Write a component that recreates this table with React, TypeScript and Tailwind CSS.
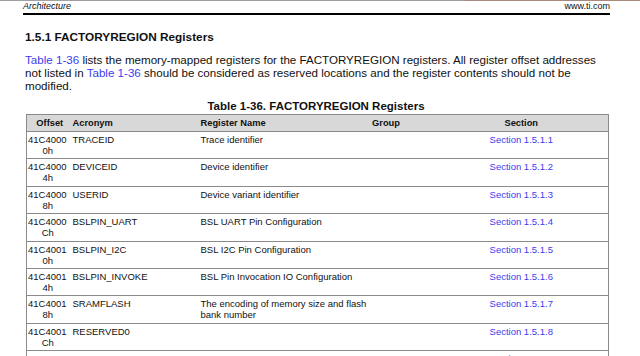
import React from 'react';

type Row = { off: string; sub: string; acr: string; name: string[]; sec: string };

const rows: Row[] = [
  { off: '41C4000', sub: '0h', acr: 'TRACEID', name: ['Trace identifier'], sec: 'Section 1.5.1.1' },
  { off: '41C4000', sub: '4h', acr: 'DEVICEID', name: ['Device identifier'], sec: 'Section 1.5.1.2' },
  { off: '41C4000', sub: '8h', acr: 'USERID', name: ['Device variant identifier'], sec: 'Section 1.5.1.3' },
  { off: '41C4000', sub: 'Ch', acr: 'BSLPIN_UART', name: ['BSL UART Pin Configuration'], sec: 'Section 1.5.1.4' },
  { off: '41C4001', sub: '0h', acr: 'BSLPIN_I2C', name: ['BSL I2C Pin Configuration'], sec: 'Section 1.5.1.5' },
  { off: '41C4001', sub: '4h', acr: 'BSLPIN_INVOKE', name: ['BSL Pin Invocation IO Configuration'], sec: 'Section 1.5.1.6' },
  { off: '41C4001', sub: '8h', acr: 'SRAMFLASH', name: ['The encoding of memory size and flash', 'bank number'], sec: 'Section 1.5.1.7' },
  { off: '41C4001', sub: 'Ch', acr: 'RESERVED0', name: [], sec: 'Section 1.5.1.8' },
  { off: '41C4002', sub: '0h', acr: 'RESERVED1', name: [], sec: 'Section 1.5.1.9' },
];

const Link: React.FC<{ children: React.ReactNode }> = ({ children }) => (
  <span className="text-[#3c3cf0]">{children}</span>
);

export default function App() {
  return (
    <div className="w-[640px] h-[356px] overflow-hidden bg-white text-[#111] font-['Liberation_Sans',Arial,sans-serif]">
      {/* top edge of viewer */}
      <div className="flex h-px">
        <div className="w-[465px] bg-[#a0a0a0]" />
        <div className="flex-1 bg-[#a88a7c]" />
      </div>

      {/* page header */}
      <div className="ml-[23px] w-[587px] flex justify-between items-end text-[9px] leading-[11px] pb-[1px] border-b-2 border-black">
        <span className="italic">Architecture</span>
        <span>www.ti.com</span>
      </div>

      <div className="pl-[25px]">
        <h2 className="mt-[15px] font-bold text-[11.8px] leading-[14px]">1.5.1 FACTORYREGION Registers</h2>
        <p className="mt-[9px] text-[11.6px] leading-[13px] whitespace-nowrap">
          <Link>Table 1-36</Link> lists the memory-mapped registers for the FACTORYREGION registers. All register offset addresses
          <br />
          not listed in <Link>Table 1-36</Link> should be considered as reserved locations and the register contents should not be
          <br />
          modified.
        </p>

        <div className="mt-[8px] w-[582px] text-center font-bold text-[11.5px] leading-[13px]">
          Table 1-36. FACTORYREGION Registers
        </div>

        <table className="mt-[1px] ml-px w-[582px] table-fixed border-collapse border border-[#8a8a8a] text-[9.5px]">
          <colgroup>
            <col className="w-[43px]" />
            <col className="w-[128px]" />
            <col className="w-[140px]" />
            <col className="w-[97px]" />
            <col className="w-[174px]" />
          </colgroup>
          <thead>
            <tr className="bg-[#d8d8d8] h-[17px] leading-[12px] text-[9.3px]">
              <th className="text-center font-bold pl-[3px]">Offset</th>
              <th className="text-left font-bold pl-[3px]">Acronym</th>
              <th className="text-left font-bold pl-[3px]">Register Name</th>
              <th className="text-center font-bold">Group</th>
              <th className="text-center font-bold">Section</th>
            </tr>
          </thead>
          <tbody>
            {rows.map((r, i) => (
              <tr key={i} className="border-t border-[#8a8a8a] h-[27.4px] align-top leading-[11px]">
                <td className="pt-[2px]">
                  <div className="pl-[1px]">{r.off}</div>
                  <div className="text-center pr-[1px]">{r.sub}</div>
                </td>
                <td className="pt-[2px] pl-[3px]">{r.acr}</td>
                <td className="pt-[2px] pl-[3px] whitespace-nowrap">
                  {r.name.map((n, j) => (
                    <div key={j}>{n}</div>
                  ))}
                </td>
                <td className="pt-[2px]"></td>
                <td className="pt-[2px] text-center">
                  <Link>{r.sec}</Link>
                </td>
              </tr>
            ))}
          </tbody>
        </table>
      </div>
    </div>
  );
}
